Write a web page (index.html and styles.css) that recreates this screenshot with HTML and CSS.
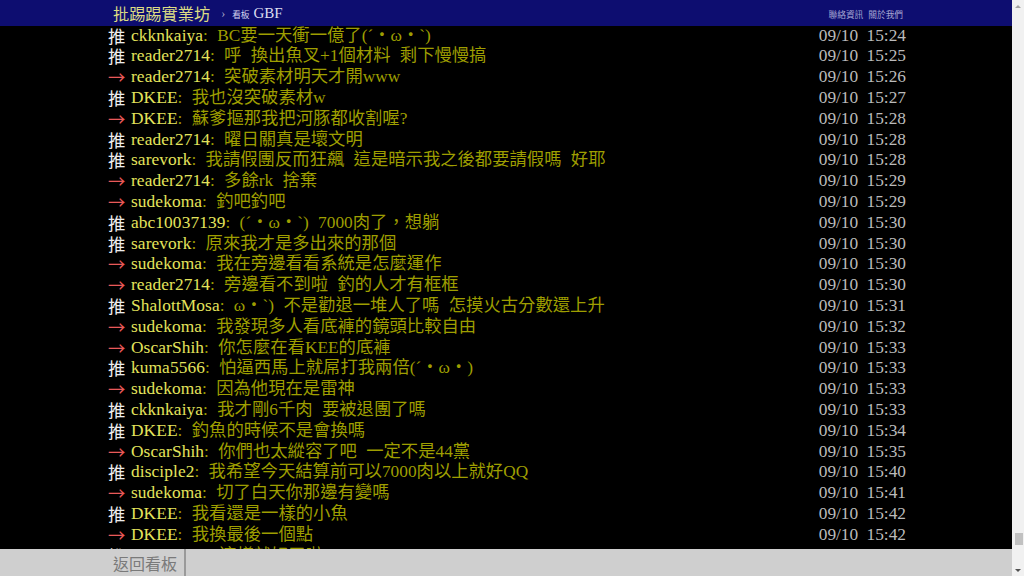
FILE: index.html
```html
<!DOCTYPE html>
<html lang="zh-Hant">
<head>
<meta charset="utf-8">
<title>GBF - 批踢踢實業坊</title>
<link rel="stylesheet" href="styles.css">
</head>
<body>
<div class="page">
  <header class="topbar">
    <div class="wrap topbar-inner">
      <span class="logo">批踢踢實業坊</span>
      <span class="sep">›</span>
      <span class="board-label">看板</span>
      <span class="board-name">GBF</span>
      <nav class="links"><span>聯絡資訊</span><span>關於我們</span></nav>
    </div>
  </header>
  <main class="content">
    <div class="wrap pushes">
      <div class="push"><span class="tag">推</span><span class="uid">ckknkaiya</span><span class="txt">: BC要一天衝一億了(ˊ・ω・ˋ)</span><span class="time">09/10 15:24</span></div>
      <div class="push"><span class="tag">推</span><span class="uid">reader2714</span><span class="txt">: 呼 換出魚叉+1個材料 剩下慢慢搞</span><span class="time">09/10 15:25</span></div>
      <div class="push"><span class="tag arrow">→</span><span class="uid">reader2714</span><span class="txt">: 突破素材明天才開www</span><span class="time">09/10 15:26</span></div>
      <div class="push"><span class="tag">推</span><span class="uid">DKEE</span><span class="txt">: 我也沒突破素材w</span><span class="time">09/10 15:27</span></div>
      <div class="push"><span class="tag arrow">→</span><span class="uid">DKEE</span><span class="txt">: 蘇爹摳那我把河豚都收割喔?</span><span class="time">09/10 15:28</span></div>
      <div class="push"><span class="tag">推</span><span class="uid">reader2714</span><span class="txt">: 曜日關真是壞文明</span><span class="time">09/10 15:28</span></div>
      <div class="push"><span class="tag">推</span><span class="uid">sarevork</span><span class="txt">: 我請假團反而狂飆 這是暗示我之後都要請假嗎 好耶</span><span class="time">09/10 15:28</span></div>
      <div class="push"><span class="tag arrow">→</span><span class="uid">reader2714</span><span class="txt">: 多餘rk 捨棄</span><span class="time">09/10 15:29</span></div>
      <div class="push"><span class="tag arrow">→</span><span class="uid">sudekoma</span><span class="txt">: 釣吧釣吧</span><span class="time">09/10 15:29</span></div>
      <div class="push"><span class="tag">推</span><span class="uid">abc10037139</span><span class="txt">: (ˊ・ω・ˋ) 7000肉了，想躺</span><span class="time">09/10 15:30</span></div>
      <div class="push"><span class="tag">推</span><span class="uid">sarevork</span><span class="txt">: 原來我才是多出來的那個</span><span class="time">09/10 15:30</span></div>
      <div class="push"><span class="tag arrow">→</span><span class="uid">sudekoma</span><span class="txt">: 我在旁邊看看系統是怎麼運作</span><span class="time">09/10 15:30</span></div>
      <div class="push"><span class="tag arrow">→</span><span class="uid">reader2714</span><span class="txt">: 旁邊看不到啦 釣的人才有框框</span><span class="time">09/10 15:30</span></div>
      <div class="push"><span class="tag">推</span><span class="uid">ShalottMosa</span><span class="txt">: ω・ˋ) 不是勸退一堆人了嗎 怎摸火古分數還上升</span><span class="time">09/10 15:31</span></div>
      <div class="push"><span class="tag arrow">→</span><span class="uid">sudekoma</span><span class="txt">: 我發現多人看底褲的鏡頭比較自由</span><span class="time">09/10 15:32</span></div>
      <div class="push"><span class="tag arrow">→</span><span class="uid">OscarShih</span><span class="txt">: 你怎麼在看KEE的底褲</span><span class="time">09/10 15:33</span></div>
      <div class="push"><span class="tag">推</span><span class="uid">kuma5566</span><span class="txt">: 怕逼西馬上就屌打我兩倍(ˊ・ω・)</span><span class="time">09/10 15:33</span></div>
      <div class="push"><span class="tag arrow">→</span><span class="uid">sudekoma</span><span class="txt">: 因為他現在是雷神</span><span class="time">09/10 15:33</span></div>
      <div class="push"><span class="tag">推</span><span class="uid">ckknkaiya</span><span class="txt">: 我才剛6千肉 要被退團了嗎</span><span class="time">09/10 15:33</span></div>
      <div class="push"><span class="tag">推</span><span class="uid">DKEE</span><span class="txt">: 釣魚的時候不是會換嗎</span><span class="time">09/10 15:34</span></div>
      <div class="push"><span class="tag arrow">→</span><span class="uid">OscarShih</span><span class="txt">: 你們也太縱容了吧 一定不是44黨</span><span class="time">09/10 15:35</span></div>
      <div class="push"><span class="tag">推</span><span class="uid">disciple2</span><span class="txt">: 我希望今天結算前可以7000肉以上就好QQ</span><span class="time">09/10 15:40</span></div>
      <div class="push"><span class="tag arrow">→</span><span class="uid">sudekoma</span><span class="txt">: 切了白天你那邊有變嗎</span><span class="time">09/10 15:41</span></div>
      <div class="push"><span class="tag">推</span><span class="uid">DKEE</span><span class="txt">: 我看還是一樣的小魚</span><span class="time">09/10 15:42</span></div>
      <div class="push"><span class="tag arrow">→</span><span class="uid">DKEE</span><span class="txt">: 我換最後一個點</span><span class="time">09/10 15:42</span></div>
      <div class="push"><span class="tag">推</span><span class="uid">kuma5566</span><span class="txt">: 這樣就好了啦</span><span class="time">09/10 15:43</span></div>
    </div>
  </main>
  <footer class="navbar">
    <div class="wrap navbar-inner">
      <span class="btn">返回看板</span>
    </div>
  </footer>
</div>
<div class="scrollbar">
  <span class="arr arr-up"></span>
  <span class="track"></span>
  <span class="thumb"></span>
  <span class="arr arr-down"></span>
</div>
</body>
</html>
```

FILE: styles.css
```css
html, body {
  margin: 0;
  padding: 0;
  height: 576px;
  overflow: hidden;
}

body {
  display: flex;
  background: #000;
  font-family: "Liberation Serif", "Noto Sans CJK TC", serif;
}

.page {
  flex: 1;
  display: flex;
  flex-direction: column;
  min-width: 0;
  height: 576px;
}

.wrap {
  width: 800px;
  margin: 0 auto;
  box-sizing: border-box;
}

/* top bar */
.topbar {
  height: 26px;
  flex: none;
  background: #0d0d70;
  position: relative;
  z-index: 1;
}

.topbar-inner {
  height: 26px;
  display: flex;
  align-items: center;
  padding-left: 7px;
  padding-right: 3px;
}

.logo {
  font-family: "Noto Sans CJK TC", sans-serif;
  font-size: 16.2px;
  line-height: 26px;
  color: #dcdc84;
}

.sep {
  color: #a8a8c8;
  font-size: 12px;
  margin: 1px 7px 0 11px;
}

.board-label {
  font-family: "Noto Sans CJK TC", sans-serif;
  font-size: 8.7px;
  color: #d4d4ee;
  margin-right: 4px;
  margin-top: 2px;
}

.board-name {
  font-size: 15px;
  color: #dcdcf0;
}

.links {
  margin-left: auto;
  display: flex;
  gap: 5px;
  font-family: "Noto Sans CJK TC", sans-serif;
  font-size: 8.7px;
  color: #a6a6d2;
  margin-top: 2px;
}

/* pushes */
.content {
  flex: 1;
  overflow: hidden;
  min-height: 0;
}

.pushes {
  margin-top: -0.4px;
  font-size: 17.33px;
  line-height: 20.8px;
}

.push {
  display: flex;
  white-space: pre;
  height: 20.8px;
}

.tag {
  font-family: "Noto Sans CJK TC", sans-serif;
  color: #eeeeee;
  width: 23px;
  margin-left: 2px;
  flex: none;
}

.tag.arrow {
  color: #e85a5a;
}

.uid {
  color: #e4e45c;
  letter-spacing: 0.1px;
}

.txt {
  color: #9e9e00;
  word-spacing: 5px;
}

.time {
  margin-left: auto;
  color: #bbbbbb;
  word-spacing: 4px;
}

/* bottom bar */
.navbar {
  height: 27px;
  flex: none;
  background: #cfcfcf;
  position: relative;
  z-index: 1;
}

.navbar-inner {
  height: 27px;
  display: flex;
}

.btn {
  display: flex;
  align-items: center;
  padding: 0 7px 0 7px;
  font-family: "Noto Sans CJK TC", sans-serif;
  font-size: 16px;
  color: #7a7a7a;
  border-right: 2px solid #9a9a9a;
}

/* scrollbar */
.scrollbar {
  width: 12px;
  flex: none;
  height: 576px;
  background: #f1f1f1;
  display: flex;
  flex-direction: column;
  align-items: center;
}

.arr {
  width: 12px;
  height: 12px;
  display: flex;
  align-items: center;
  justify-content: center;
  flex: none;
}

.arr::before {
  content: "";
  width: 0;
  height: 0;
  border-left: 3px solid transparent;
  border-right: 3px solid transparent;
}

.arr-up::before {
  border-bottom: 3px solid #a3a3a3;
}

.arr-down::before {
  border-top: 3px solid #505050;
}

.track {
  flex: 1;
}

.thumb {
  width: 8px;
  height: 12px;
  margin-left: 2px;
  margin-bottom: 19px;
  background: #c1c1c1;
  flex: none;
}
```
